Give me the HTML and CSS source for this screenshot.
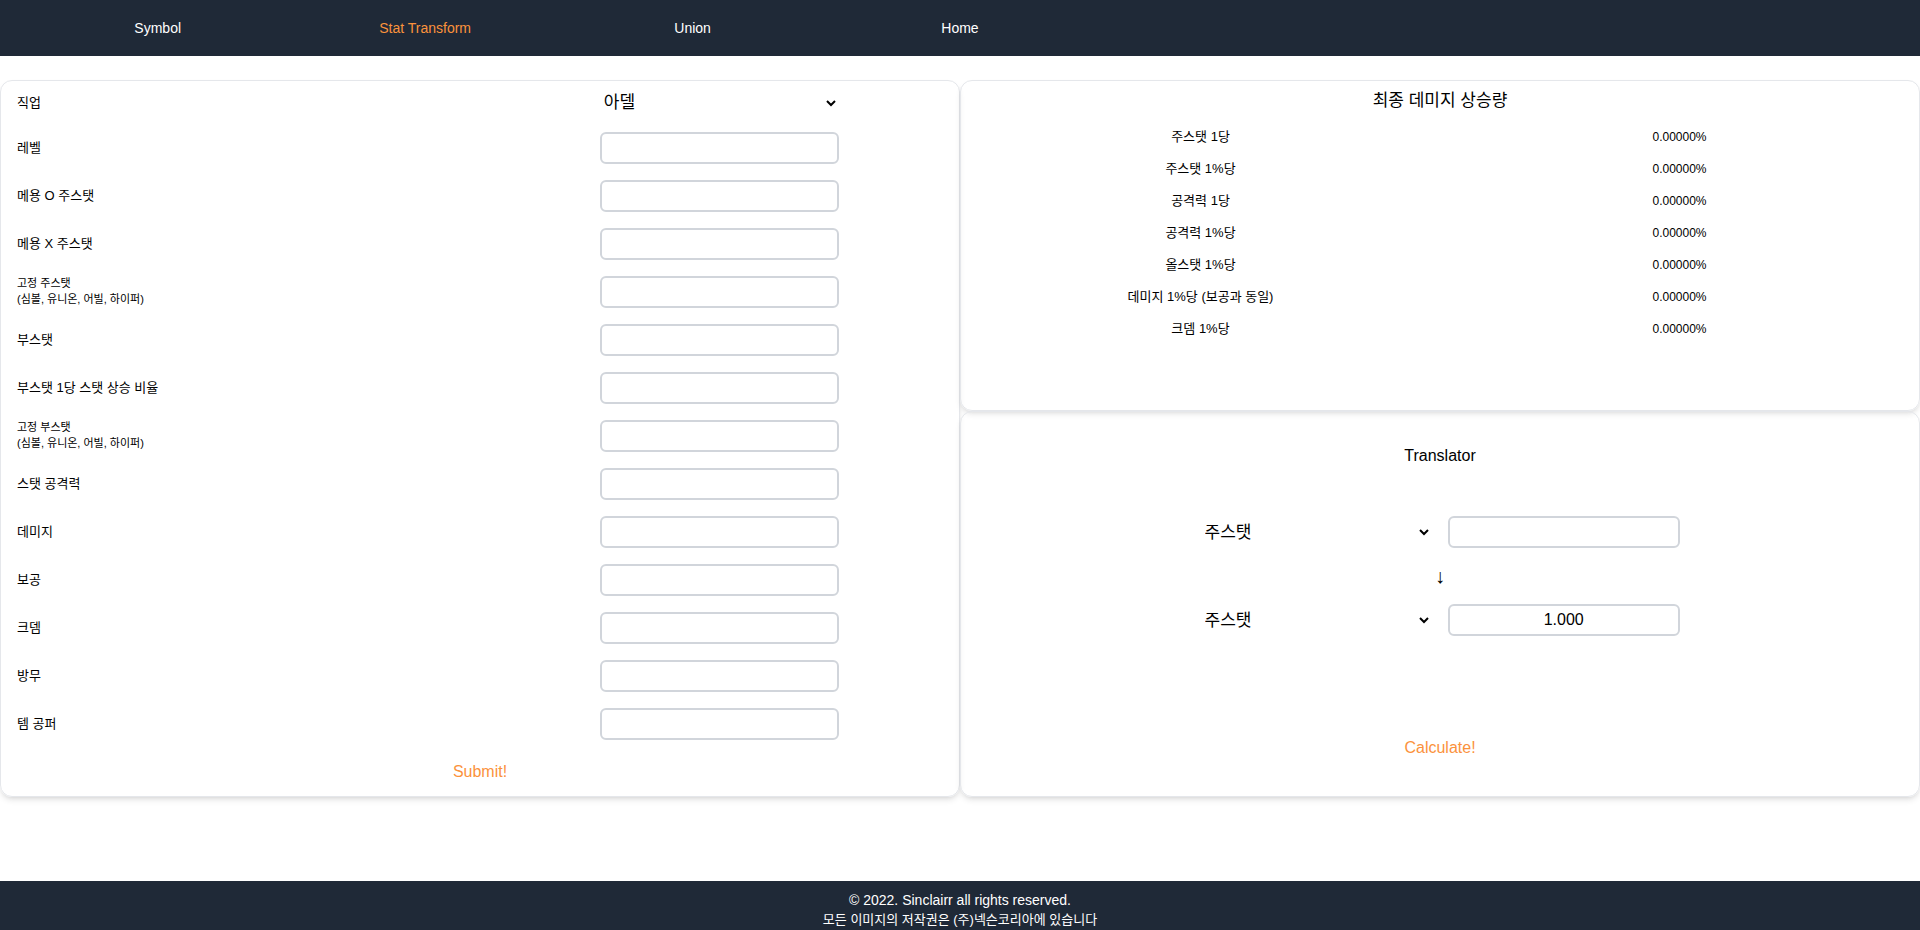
FILE: index.html
```html
<!DOCTYPE html>
<html lang="ko">
<head>
<meta charset="utf-8">
<meta name="viewport" content="width=device-width, initial-scale=1">
<title>Stat Transform</title>
<link rel="stylesheet" href="styles.css">
</head>
<body>
<nav class="nav">
  <a href="#symbol">Symbol</a>
  <a class="active" href="#stat">Stat Transform</a>
  <a href="#union">Union</a>
  <a href="#home">Home</a>
</nav>
<main class="main">
  <form class="card stats">
    <div class="row row-job"><label for="job">직업</label><select class="select half" id="job"><option>아델</option></select></div>
    <div class="row"><label for="f1">레벨</label><input class="field half" id="f1"></div>
    <div class="row"><label for="f2">메용 O 주스탯</label><input class="field half" id="f2"></div>
    <div class="row"><label for="f3">메용 X 주스탯</label><input class="field half" id="f3"></div>
    <div class="row"><label class="small" for="f4">고정 주스탯<br>(심볼, 유니온, 어빌, 하이퍼)</label><input class="field half" id="f4"></div>
    <div class="row"><label for="f5">부스탯</label><input class="field half" id="f5"></div>
    <div class="row"><label for="f6">부스탯 1당 스탯 상승 비율</label><input class="field half" id="f6"></div>
    <div class="row"><label class="small" for="f7">고정 부스탯<br>(심볼, 유니온, 어빌, 하이퍼)</label><input class="field half" id="f7"></div>
    <div class="row"><label for="f8">스탯 공격력</label><input class="field half" id="f8"></div>
    <div class="row"><label for="f9">데미지</label><input class="field half" id="f9"></div>
    <div class="row"><label for="f10">보공</label><input class="field half" id="f10"></div>
    <div class="row"><label for="f11">크뎀</label><input class="field half" id="f11"></div>
    <div class="row"><label for="f12">방무</label><input class="field half" id="f12"></div>
    <div class="row"><label for="f13">템 공퍼</label><input class="field half" id="f13"></div>
    <button class="action" type="button">Submit!</button>
  </form>
  <div class="side">
    <section class="card result">
      <h2 class="title title-ko">최종 데미지 상승량</h2>
      <table class="table">
        <tbody>
          <tr><th scope="row">주스탯 1당</th><td>0.00000%</td></tr>
          <tr><th scope="row">주스탯 1%당</th><td>0.00000%</td></tr>
          <tr><th scope="row">공격력 1당</th><td>0.00000%</td></tr>
          <tr><th scope="row">공격력 1%당</th><td>0.00000%</td></tr>
          <tr><th scope="row">올스탯 1%당</th><td>0.00000%</td></tr>
          <tr><th scope="row">데미지 1%당 (보공과 동일)</th><td>0.00000%</td></tr>
          <tr><th scope="row">크뎀 1%당</th><td>0.00000%</td></tr>
        </tbody>
      </table>
    </section>
    <form class="card translator">
      <h2 class="title">Translator</h2>
      <div class="convert">
        <div class="pair"><select class="select" aria-label="변환 전 스탯"><option>주스탯</option></select><input class="field" aria-label="변환 전 값"></div>
        <div class="arrow">↓</div>
        <div class="pair"><select class="select" aria-label="변환 후 스탯"><option>주스탯</option></select><input class="field" aria-label="변환 후 값" value="1.000" readonly></div>
      </div>
      <button class="action" type="button">Calculate!</button>
    </form>
  </div>
</main>
<footer class="footer">
  <p class="copy">© 2022. Sinclairr all rights reserved.</p>
  <p class="notice">모든 이미지의 저작권은 (주)넥슨코리아에 있습니다</p>
</footer>
</body>
</html>
```
FILE: styles.css
```css
*, *::before, *::after { box-sizing: border-box; }

body {
  margin: 0;
  min-height: 100vh;
  display: flex;
  flex-direction: column;
  background: #fff;
  color: #000;
  font-family: "Liberation Sans", "Noto Sans CJK KR", sans-serif;
  font-size: 16px;
  line-height: 24px;
}

.nav {
  display: grid;
  grid-template-columns: repeat(7, 1fr);
  align-items: center;
  height: 56px;
  padding: 0 24px;
  background: #1f2937;
  font-size: 14px;
  line-height: 20px;
  text-align: center;
}
.nav a { color: #fff; text-decoration: none; }
.nav a.active { color: #fb923c; }

.main {
  display: grid;
  grid-template-columns: 1fr 1fr;
  margin: 24px 0 auto;
}
.side { display: flex; flex-direction: column; }

.card {
  border: 1px solid #e5e7eb;
  border-radius: 12px;
  box-shadow: 0 4px 6px -1px rgba(0, 0, 0, 0.1), 0 2px 4px -2px rgba(0, 0, 0, 0.1);
}

.stats { display: flex; flex-direction: column; }
.row {
  display: grid;
  grid-template-columns: 1fr 1fr;
  align-items: center;
  height: 48px;
  font-size: 13px;
  line-height: 16px;
}
.row-job { height: 43px; }
.row label { padding-left: 16px; }
.row .small { padding-bottom: 2px; font-size: 11px; }
.half { width: 50%; justify-self: center; }

.field {
  min-width: 0;
  height: 32px;
  padding: 0 8px;
  border: 2px solid #d1d5db;
  border-radius: 6px;
  background: #fff;
  color: #000;
  font: inherit;
  font-size: 16px;
  text-align: center;
}
.select {
  min-width: 0;
  height: 24px;
  padding: 0;
  border: 0;
  background: #fff;
  color: #000;
  font: inherit;
  font-size: 17px;
}
.action {
  height: 48px;
  padding: 0;
  border: 0;
  background: none;
  color: #fb923c;
  font: inherit;
}

.title {
  margin: 0;
  font-size: 16px;
  font-weight: 400;
  text-align: center;
}
.title-ko { font-size: 17px; }

.result { height: 331px; padding-top: 8px; }
.table {
  width: 100%;
  margin-top: 8px;
  table-layout: fixed;
  border-collapse: collapse;
  font-size: 12px;
  line-height: 16px;
  text-align: center;
}
.table th, .table td { height: 32px; padding: 0; }
.table th { font-size: 13px; font-weight: 400; }

.translator {
  flex: 1;
  display: flex;
  flex-direction: column;
  align-items: center;
  padding: 32px 0 24px;
}
.convert {
  width: 50%;
  display: grid;
  gap: 16px;
  margin: 48px 0 auto;
}
.pair {
  display: grid;
  grid-template-columns: 1fr 1fr;
  align-items: center;
  gap: 16px;
}
.arrow { font-size: 20px; text-align: center; }

.footer {
  padding: 9px 0 0;
  background: #1f2937;
  color: #fff;
  text-align: center;
}
.footer p { margin: 0; line-height: 20px; }
.copy { font-size: 14px; }
.notice { font-size: 13px; }
```
